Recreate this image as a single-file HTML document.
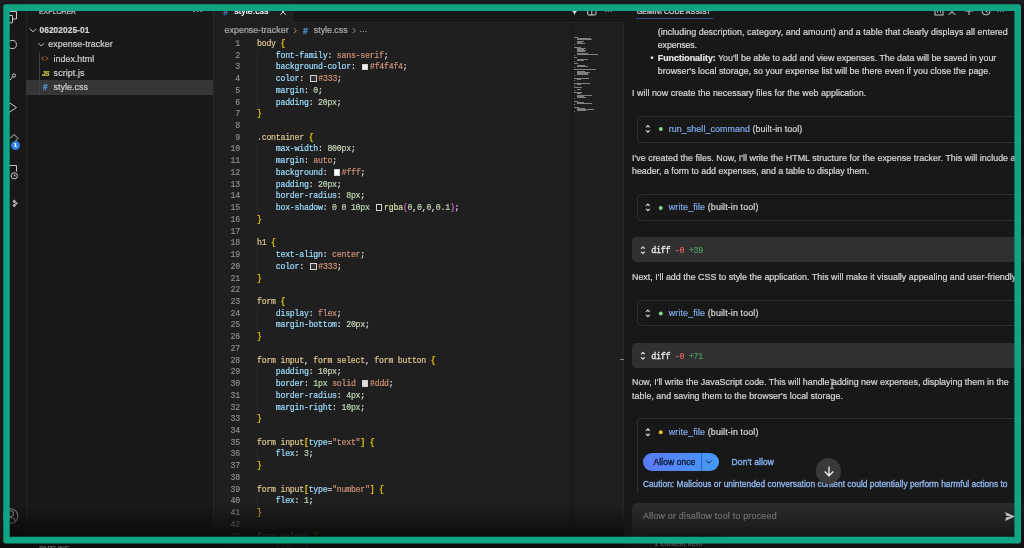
<!DOCTYPE html>
<html lang="en">
<head>
<meta charset="utf-8">
<title>style.css — expense-tracker</title>
<style>
*{box-sizing:border-box;margin:0;padding:0}
html,body{width:1024px;height:548px;overflow:hidden;background:#181818}
body{position:relative;font-family:"Liberation Sans",sans-serif;color:#ccc}
#wrap{position:absolute;left:0;top:0;width:1024px;height:548px;overflow:hidden;filter:blur(.35px)}
.abs{position:absolute}
.bg{position:absolute;top:0;height:548px}
.t{position:absolute;white-space:nowrap;line-height:12px;height:12px;font-size:8.9px;color:#ccc;-webkit-text-stroke:.22px}
.mono{font-family:"Liberation Mono",monospace}
.link{color:#7da8e8}
/* code */
.ln,.cl{position:absolute;font-family:"Liberation Mono",monospace;font-size:8.2px;letter-spacing:-.22px;line-height:11.73px;height:11.73px;white-space:pre}
.ln{left:213px;width:26.9px;text-align:right;color:#8e8e8e;-webkit-text-stroke:.15px}
.cl{left:257px;color:#dadada;-webkit-text-stroke:.2px}
.sel{color:#dcc38c}.prop{color:#9cdcfe}.val{color:#ce9178}.num{color:#c0d4b4}.br1{color:#ffd700}.br2{color:#da70d6}.fn{color:#dcdcaa}
.cb{display:inline-block;width:6.5px;height:6.5px;border:0.7px solid #d2d2d2;margin:0 1.8px 0 1.4px;vertical-align:-0.8px}
.ig{position:absolute;left:257px;width:1px;background:#2a2a2a}
#mm i{position:absolute;height:0.7px;background:#a0a0a0;opacity:.75;display:block}
.toolbox{position:absolute;left:637px;width:400px;border:1px solid #303030;border-radius:4.5px}
.diffbox{position:absolute;left:631.7px;width:400px;height:24.5px;border-radius:4.500px;background:#303030}
</style>
</head>
<body>
<div id="wrap">
<!-- region backgrounds -->
<div class="bg" style="left:0;width:26px;background:#181818"></div>
<div class="bg" style="left:26px;width:187.5px;background:#191919"></div>
<div class="bg" style="left:25.5px;width:1px;background:#242424"></div>
<div class="bg" style="left:213px;width:410.500px;background:#1f1f1f"></div>
<div class="bg" style="left:213px;width:1px;background:#272727"></div>
<div class="bg" style="left:623.500px;width:400.500px;background:#181818"></div>
<div class="bg" style="left:623px;width:1px;background:#262626"></div>
<!-- tab bar -->
<div class="abs" style="left:214px;top:0;width:409.5px;height:21.6px;background:#181818"></div>
<div class="abs" style="left:214px;top:21.6px;width:409.5px;height:1px;background:#272727"></div>
<div class="abs" style="left:214px;top:0;width:78px;height:22.6px;background:#1f1f1f"></div>
<div class="abs" style="left:292px;top:0;width:1px;height:21.6px;background:#272727"></div>
<!-- selected row -->
<div class="abs" style="left:26px;top:80.100px;width:187.300px;height:14.600px;background:#363639"></div>
<div class="abs" style="left:39.200px;top:52px;width:1px;height:42.700px;background:#3e3e3e"></div>
<!-- minimap shade -->
<div class="abs" style="left:567px;top:22.600px;width:6.500px;height:526px;background:linear-gradient(90deg,rgba(0,0,0,0),rgba(0,0,0,.16))"></div>

<!-- ACTIVITY BAR ICONS -->
<svg class="abs" style="left:0;top:0" width="26" height="548" viewBox="0 0 26 548" fill="none" stroke="#c8c8c8" stroke-width="1">
  <path d="M10 11.500h6.500v7.500h-4"/><path d="M8 15.500h4.500v7.300h-4.500"/>
  <circle cx="12.300" cy="44.500" r="4.100"/>
  <circle cx="14" cy="75.500" r="1.600"/><path d="M12.800 76.800 10 80"/>
  <path d="M9 102.500 16.500 107.500 9 112.500"/>
  <path d="M10 138.500 14 134.500 18 138.500 15.500 141"/>
  <path d="M9.500 165.500h7v6"/><circle cx="14.300" cy="175.800" r="3.100"/><path d="M14.300 174.300v1.600h1.300"/>
  <g stroke="#8e8e8e" stroke-width="1.100"><circle cx="10.500" cy="516" r="7.300"/><circle cx="10.500" cy="513.700" r="2.900"/><path d="M5.400 521.300c1.200-2.900 3-3.800 5.100-3.800s3.900.9 5.100 3.800"/></g>
</svg>
<svg class="abs" style="left:10.300px;top:199.300px" width="8.500" height="8.500" viewBox="0 0 12 12" fill="#bcbcbc">
  <path d="M6 .800 8.600 3.400 6 6 3.400 3.400z"/><path d="M8.800 3.800 11.200 6.200 8.800 8.600 6.400 6.200z" opacity=".85"/><path d="M6 6.400 8.600 9 6 11.600 3.400 9z"/>
</svg>
<div class="abs" style="left:10.5px;top:140.5px;width:9.6px;height:9.6px;border-radius:50%;background:#2f7fe0"></div>
<div class="t" style="left:10.5px;top:139.400px;width:9.6px;text-align:center;font-size:6px;font-weight:bold;color:#fff">1</div>

<!-- SIDEBAR ICONS -->
<svg class="abs" style="left:26px;top:0" width="187" height="100" viewBox="0 0 187 100" fill="none" stroke="#c5c5c5" stroke-width="1">
  <path d="M3.800 28.700 7 31.900 10.200 28.700"/>
  <path d="M12.500 43.200 15.300 46 18.100 43.200"/>
</svg>
<div class="t" style="left:192.500px;top:4.600px;font-size:9px;color:#c4c4c4;letter-spacing:.6px">···</div>
<svg class="abs" style="left:41.200px;top:55.400px" width="8" height="7" viewBox="0 0 8 7" fill="none" stroke="#d9782f" stroke-width="1"><path d="M2.700 1.600 .900 3.500 2.700 5.400M4.900 1.600 6.700 3.500 4.900 5.400"/></svg>
<div class="t" style="left:41.900px;top:67.500px;font-size:6.3px;font-weight:bold;font-style:italic;color:#cbcb41;letter-spacing:-.2px">JS</div>
<div class="t" style="left:42.800px;top:81.300px;font-size:8.3px;font-weight:bold;font-style:italic;color:#4f94d4;-webkit-text-stroke:.3px">#</div>

<!-- TAB / BREADCRUMB ICONS -->
<div class="t" style="left:223.300px;top:5.800px;font-size:8.3px;font-weight:bold;font-style:italic;color:#427fb8;-webkit-text-stroke:.3px">#</div>
<svg class="abs" style="left:278.600px;top:7.600px" width="8" height="8" viewBox="0 0 8 8" stroke="#d0d0d0" stroke-width="1" fill="none"><path d="M1.200 1.200 6.800 6.800M6.800 1.200 1.200 6.800"/></svg>
<svg class="abs" style="left:568px;top:4px" width="50" height="14" viewBox="0 0 50 14" fill="none" stroke="#d0d0d0" stroke-width="1">
  <path d="M6.600 1.500c.4 3.200 1.600 4.600 4.800 5-3.200.4-4.400 1.800-4.800 5-.4-3.200-1.600-4.600-4.800-5 3.200-.4 4.400-1.800 4.800-5z" fill="#e8e8e8" stroke="none"/>
  <rect x="19.700" y="3.500" width="8.200" height="7.500" rx="1"/><path d="M23.800 3.500v7.500"/>
  <circle cx="37.600" cy="7" r=".7" fill="#d0d0d0" stroke="none"/><circle cx="40.300" cy="7" r=".7" fill="#d0d0d0" stroke="none"/><circle cx="43" cy="7" r=".7" fill="#d0d0d0" stroke="none"/>
</svg>
<svg class="abs" style="left:291px;top:26px" width="8" height="9" viewBox="0 0 8 9" fill="none" stroke="#a0a0a0" stroke-width=".9"><path d="M2.800 2.200 5.300 4.700 2.800 7.200"/></svg>
<div class="t" style="left:303px;top:24.800px;font-size:8.3px;font-weight:bold;font-style:italic;color:#4f94d4;-webkit-text-stroke:.3px">#</div>
<svg class="abs" style="left:350px;top:26px" width="8" height="9" viewBox="0 0 8 9" fill="none" stroke="#a0a0a0" stroke-width=".9"><path d="M2.800 2.200 5.300 4.700 2.800 7.200"/></svg>

<!-- CODE -->
<div class="ig" style="top:49.63px;height:58.65px"></div>
<div class="ig" style="top:143.47px;height:70.38px"></div>
<div class="ig" style="top:249.04px;height:23.46px"></div>
<div class="ig" style="top:307.69px;height:23.46px"></div>
<div class="ig" style="top:366.34px;height:46.92px"></div>
<div class="ig" style="top:448.45px;height:11.73px"></div>
<div class="ig" style="top:495.37px;height:11.73px"></div>
<div class="ig" style="top:542.29px;height:11.73px"></div>
<div class="ln" style="top:37.90px">1</div>
<div class="cl" style="top:37.90px"><span class="sel">body</span> <span class="br1">{</span></div>
<div class="ln" style="top:49.63px">2</div>
<div class="cl" style="top:49.63px">    <span class="prop">font-family</span>: <span class="val">sans-serif</span>;</div>
<div class="ln" style="top:61.36px">3</div>
<div class="cl" style="top:61.36px">    <span class="prop">background-color</span>: <span class="cb" style="background:#f4f4f4"></span><span class="val">#f4f4f4</span>;</div>
<div class="ln" style="top:73.09px">4</div>
<div class="cl" style="top:73.09px">    <span class="prop">color</span>: <span class="cb" style="background:#333"></span><span class="val">#333</span>;</div>
<div class="ln" style="top:84.82px">5</div>
<div class="cl" style="top:84.82px">    <span class="prop">margin</span>: <span class="num">0</span>;</div>
<div class="ln" style="top:96.55px">6</div>
<div class="cl" style="top:96.55px">    <span class="prop">padding</span>: <span class="num">20px</span>;</div>
<div class="ln" style="top:108.28px">7</div>
<div class="cl" style="top:108.28px"><span class="br1">}</span></div>
<div class="ln" style="top:120.01px">8</div>
<div class="ln" style="top:131.74px">9</div>
<div class="cl" style="top:131.74px"><span class="sel">.container</span> <span class="br1">{</span></div>
<div class="ln" style="top:143.47px">10</div>
<div class="cl" style="top:143.47px">    <span class="prop">max-width</span>: <span class="num">800px</span>;</div>
<div class="ln" style="top:155.20px">11</div>
<div class="cl" style="top:155.20px">    <span class="prop">margin</span>: <span class="val">auto</span>;</div>
<div class="ln" style="top:166.93px">12</div>
<div class="cl" style="top:166.93px">    <span class="prop">background</span>: <span class="cb" style="background:#fff"></span><span class="val">#fff</span>;</div>
<div class="ln" style="top:178.66px">13</div>
<div class="cl" style="top:178.66px">    <span class="prop">padding</span>: <span class="num">20px</span>;</div>
<div class="ln" style="top:190.39px">14</div>
<div class="cl" style="top:190.39px">    <span class="prop">border-radius</span>: <span class="num">8px</span>;</div>
<div class="ln" style="top:202.12px">15</div>
<div class="cl" style="top:202.12px">    <span class="prop">box-shadow</span>: <span class="num">0</span> <span class="num">0</span> <span class="num">10px</span> <span class="cb" style="background:#1a1a1a"></span><span class="fn">rgba</span><span class="br2">(</span><span class="num">0</span>,<span class="num">0</span>,<span class="num">0</span>,<span class="num">0.1</span><span class="br2">)</span>;</div>
<div class="ln" style="top:213.85px">16</div>
<div class="cl" style="top:213.85px"><span class="br1">}</span></div>
<div class="ln" style="top:225.58px">17</div>
<div class="ln" style="top:237.31px">18</div>
<div class="cl" style="top:237.31px"><span class="sel">h1</span> <span class="br1">{</span></div>
<div class="ln" style="top:249.04px">19</div>
<div class="cl" style="top:249.04px">    <span class="prop">text-align</span>: <span class="val">center</span>;</div>
<div class="ln" style="top:260.77px">20</div>
<div class="cl" style="top:260.77px">    <span class="prop">color</span>: <span class="cb" style="background:#333"></span><span class="val">#333</span>;</div>
<div class="ln" style="top:272.50px">21</div>
<div class="cl" style="top:272.50px"><span class="br1">}</span></div>
<div class="ln" style="top:284.23px">22</div>
<div class="ln" style="top:295.96px">23</div>
<div class="cl" style="top:295.96px"><span class="sel">form</span> <span class="br1">{</span></div>
<div class="ln" style="top:307.69px">24</div>
<div class="cl" style="top:307.69px">    <span class="prop">display</span>: <span class="val">flex</span>;</div>
<div class="ln" style="top:319.42px">25</div>
<div class="cl" style="top:319.42px">    <span class="prop">margin-bottom</span>: <span class="num">20px</span>;</div>
<div class="ln" style="top:331.15px">26</div>
<div class="cl" style="top:331.15px"><span class="br1">}</span></div>
<div class="ln" style="top:342.88px">27</div>
<div class="ln" style="top:354.61px">28</div>
<div class="cl" style="top:354.61px"><span class="sel">form input</span>, <span class="sel">form select</span>, <span class="sel">form button</span> <span class="br1">{</span></div>
<div class="ln" style="top:366.34px">29</div>
<div class="cl" style="top:366.34px">    <span class="prop">padding</span>: <span class="num">10px</span>;</div>
<div class="ln" style="top:378.07px">30</div>
<div class="cl" style="top:378.07px">    <span class="prop">border</span>: <span class="num">1px</span> <span class="val">solid</span> <span class="cb" style="background:#ddd"></span><span class="val">#ddd</span>;</div>
<div class="ln" style="top:389.80px">31</div>
<div class="cl" style="top:389.80px">    <span class="prop">border-radius</span>: <span class="num">4px</span>;</div>
<div class="ln" style="top:401.53px">32</div>
<div class="cl" style="top:401.53px">    <span class="prop">margin-right</span>: <span class="num">10px</span>;</div>
<div class="ln" style="top:413.26px">33</div>
<div class="cl" style="top:413.26px"><span class="br1">}</span></div>
<div class="ln" style="top:424.99px">34</div>
<div class="ln" style="top:436.72px">35</div>
<div class="cl" style="top:436.72px"><span class="sel">form input</span><span class="br1">[</span><span class="prop">type</span>=<span class="val">"text"</span><span class="br1">]</span> <span class="br1">{</span></div>
<div class="ln" style="top:448.45px">36</div>
<div class="cl" style="top:448.45px">    <span class="prop">flex</span>: <span class="num">3</span>;</div>
<div class="ln" style="top:460.18px">37</div>
<div class="cl" style="top:460.18px"><span class="br1">}</span></div>
<div class="ln" style="top:471.91px">38</div>
<div class="ln" style="top:483.64px">39</div>
<div class="cl" style="top:483.64px"><span class="sel">form input</span><span class="br1">[</span><span class="prop">type</span>=<span class="val">"number"</span><span class="br1">]</span> <span class="br1">{</span></div>
<div class="ln" style="top:495.37px">40</div>
<div class="cl" style="top:495.37px">    <span class="prop">flex</span>: <span class="num">1</span>;</div>
<div class="ln" style="top:507.10px">41</div>
<div class="cl" style="top:507.10px"><span class="br1">}</span></div>
<div class="ln" style="top:518.83px">42</div>
<div class="ln" style="top:530.56px">43</div>
<div class="cl" style="top:530.56px"><span class="sel">form select</span> <span class="br1">{</span></div>
<div class="ln" style="top:542.29px">44</div>
<div class="cl" style="top:542.29px">    <span class="prop">flex</span>: <span class="num">2</span>;</div>
<div class="ln" style="top:554.02px">45</div>
<div class="cl" style="top:554.02px"><span class="br1">}</span></div>
<div id="mm" class="abs" style="left:0;top:0"><i style="left:574.30px;top:36.90px;width:3.48px"></i><i style="left:576.62px;top:38.10px;width:13.92px"></i><i style="left:576.62px;top:39.30px;width:15.08px"></i><i style="left:576.62px;top:40.50px;width:6.96px"></i><i style="left:576.62px;top:41.70px;width:5.80px"></i><i style="left:576.62px;top:42.90px;width:8.12px"></i><i style="left:574.30px;top:44.10px;width:0.58px"></i><i style="left:574.30px;top:46.50px;width:6.96px"></i><i style="left:576.62px;top:47.70px;width:9.86px"></i><i style="left:576.62px;top:48.90px;width:7.54px"></i><i style="left:576.62px;top:50.10px;width:9.86px"></i><i style="left:576.62px;top:51.30px;width:8.12px"></i><i style="left:576.62px;top:52.50px;width:11.02px"></i><i style="left:576.62px;top:53.70px;width:21.46px"></i><i style="left:574.30px;top:54.90px;width:0.58px"></i><i style="left:574.30px;top:57.30px;width:2.32px"></i><i style="left:576.62px;top:58.50px;width:11.02px"></i><i style="left:576.62px;top:59.70px;width:6.96px"></i><i style="left:574.30px;top:60.90px;width:0.58px"></i><i style="left:574.30px;top:63.30px;width:3.48px"></i><i style="left:576.62px;top:64.50px;width:8.12px"></i><i style="left:576.62px;top:65.70px;width:11.60px"></i><i style="left:574.30px;top:66.90px;width:0.58px"></i><i style="left:574.30px;top:69.30px;width:22.04px"></i><i style="left:576.62px;top:70.50px;width:8.12px"></i><i style="left:576.62px;top:71.70px;width:13.34px"></i><i style="left:576.62px;top:72.90px;width:11.02px"></i><i style="left:576.62px;top:74.10px;width:11.02px"></i><i style="left:574.30px;top:75.30px;width:0.58px"></i><i style="left:574.30px;top:77.70px;width:14.50px"></i><i style="left:576.62px;top:78.90px;width:4.64px"></i><i style="left:574.30px;top:80.10px;width:0.58px"></i><i style="left:574.30px;top:82.50px;width:15.66px"></i><i style="left:576.62px;top:83.70px;width:4.64px"></i><i style="left:574.30px;top:84.90px;width:0.58px"></i><i style="left:574.30px;top:87.30px;width:7.54px"></i><i style="left:576.62px;top:88.50px;width:4.64px"></i><i style="left:574.30px;top:89.70px;width:0.58px"></i><i style="left:574.30px;top:92.10px;width:7.54px"></i><i style="left:576.62px;top:93.30px;width:4.64px"></i><i style="left:576.62px;top:94.50px;width:15.08px"></i><i style="left:576.62px;top:95.70px;width:7.54px"></i><i style="left:576.62px;top:96.90px;width:9.28px"></i><i style="left:574.30px;top:98.10px;width:0.58px"></i><i style="left:574.30px;top:100.50px;width:4.06px"></i><i style="left:576.62px;top:101.70px;width:6.96px"></i><i style="left:576.62px;top:102.90px;width:15.08px"></i><i style="left:574.30px;top:104.10px;width:0.58px"></i><i style="left:574.30px;top:106.50px;width:4.64px"></i><i style="left:576.62px;top:107.70px;width:8.12px"></i><i style="left:576.62px;top:108.90px;width:17.40px"></i><i style="left:576.62px;top:110.10px;width:9.86px"></i><i style="left:574.30px;top:111.30px;width:0.58px"></i></div>

<!-- PANEL chrome -->
<div class="abs" style="left:636px;top:18.100px;width:77px;height:1.100px;background:#2d4c8a"></div>
<svg class="abs" style="left:933px;top:4.300px" width="80" height="14" viewBox="0 0 80 14" fill="none" stroke="#c8c8c8" stroke-width="1">
  <rect x="2" y="3" width="8" height="8"/><path d="M4.500 5.500v3M7.500 5.500v3"/>
  <circle cx="19" cy="5.500" r="1.800"/><path d="M15.800 11c.5-3 5.900-3 6.400 0M23.500 4.500l2 2M25.500 4.500l-2 2"/>
  <path d="M36 3v8M32 7h8"/>
  <circle cx="53" cy="7" r="4"/><path d="M53 4.500v2.800l1.800 1"/>
  <circle cx="65" cy="7" r=".7" fill="#c8c8c8" stroke="none"/><circle cx="67.700" cy="7" r=".7" fill="#c8c8c8" stroke="none"/><circle cx="70.400" cy="7" r=".7" fill="#c8c8c8" stroke="none"/>
</svg>
<div class="toolbox" style="top:115.600px;height:27.500px"></div>
<div class="toolbox" style="top:194px;height:26.900px"></div>
<div class="diffbox" style="top:237.300px"></div>
<div class="toolbox" style="top:299.700px;height:26.500px"></div>
<div class="diffbox" style="top:343.100px"></div>
<div class="toolbox" style="top:418.400px;height:74px;border-bottom:none;border-radius:4.500px 4.500px 0 0"></div>
<svg class="abs" style="left:624px;top:0" width="60" height="548" viewBox="0 0 60 548" fill="none" stroke="#d4d4d4" stroke-width="1.250">
  <path d="M22.100 127.400 23.900 125.600 25.700 127.400M22.100 130.400 23.900 132.200 25.700 130.400"/>
  <path d="M22.100 205.900 23.900 204.100 25.700 205.900M22.100 208.900 23.900 210.700 25.700 208.900"/>
  <path d="M22.100 311.900 23.900 310.100 25.700 311.900M22.100 314.900 23.900 316.700 25.700 314.900"/>
  <path d="M22.100 430.800 23.900 429 25.700 430.800M22.100 433.800 23.900 435.600 25.700 433.800"/>
  <path d="M17.100 248.700 18.900 246.900 20.700 248.700M17.100 251.700 18.900 253.500 20.700 251.700"/>
  <path d="M17.100 354.300 18.900 352.500 20.700 354.300M17.100 357.300 18.900 359.100 20.700 357.300"/>
  <g stroke="none">
  <circle cx="36.800" cy="128.900" r="2" fill="#86d886"/>
  <circle cx="36.800" cy="207.900" r="2" fill="#86d886"/>
  <circle cx="36.800" cy="313.400" r="2" fill="#86d886"/>
  <circle cx="36.800" cy="432.300" r="2" fill="#efbe3c"/>
  </g>
</svg>

<!-- allow buttons -->
<div class="abs" style="left:642.900px;top:452.800px;width:75.700px;height:18.600px;border-radius:9.300px;background:linear-gradient(90deg,#5c7af6,#4499f6)"></div>
<div class="abs" style="left:700.600px;top:452.800px;width:1px;height:18.600px;background:#2f62c4"></div>
<svg class="abs" style="left:703.600px;top:458.200px" width="10" height="8" viewBox="0 0 10 8" fill="none" stroke="#0d1b33" stroke-width="1"><path d="M2.400 2.600 5 5.200 7.600 2.600"/></svg>

<!-- scroll-down button -->
<div class="abs" style="left:815.700px;top:458.100px;width:25.800px;height:25.800px;border-radius:50%;background:#393939;z-index:5"></div>
<svg class="abs" style="left:821.600px;top:464px;z-index:6" width="14" height="14" viewBox="0 0 14 14" fill="none" stroke="#f0f0f0" stroke-width="1.300"><path d="M7 2.600v9M2.700 7.500 7 11.800 11.300 7.500"/></svg>

<!-- input -->
<div class="abs" style="left:631.700px;top:503.100px;width:400px;height:50px;border-radius:5px 5px 0 0;background:#2a2a2a"></div>
<svg class="abs" style="left:1003.500px;top:511px;z-index:8" width="12" height="11" viewBox="0 0 12 11" fill="#bdbdbd"><path d="M1 1 11 5.500 1 10 2.300 6.200 7 5.500 2.300 4.800z"/></svg>

<div class="abs" style="left:642px;top:533.500px;width:83px;height:22px;border-radius:4px;background:#171717"></div>
<!-- text cursor -->
<svg class="abs" style="left:828px;top:378px" width="8" height="12" viewBox="0 0 8 12" fill="none" stroke="#eee" stroke-width=".9"><path d="M2 1.200c1.200 0 2 .4 2 1.300v7c0 .9-.8 1.300-2 1.300M6 1.200c-1.200 0-2 .4-2 1.300M6 10.800c-1.200 0-2-.4-2-1.300M3 6h2"/></svg>
<!-- sash mark -->
<div class="abs" style="left:620px;top:359px;width:4px;height:1px;background:#8a8a8a"></div>

<!-- TEXTS -->
<div class="t" style="left:39.10px;top:6.35px;font-size:6.90px;color:#c4c4c4;letter-spacing:-0.076px">EXPLORER</div>
<div class="t" style="left:39.50px;top:24.05px;font-size:8.30px;color:#d0d0d0;letter-spacing:0.088px"><b>06202025-01</b></div>
<div class="t" style="left:48.30px;top:38.05px;font-size:8.90px;letter-spacing:0.061px">expense-tracker</div>
<div class="t" style="left:53.60px;top:52.95px;font-size:8.90px;letter-spacing:0.016px">index.html</div>
<div class="t" style="left:53.60px;top:67.35px;font-size:8.90px;letter-spacing:0.101px">script.js</div>
<div class="t" style="left:53.60px;top:80.55px;font-size:8.90px;letter-spacing:0.046px">style.css</div>
<div class="t" style="left:39.10px;top:542.75px;font-size:6.90px;color:#bdbdbd;z-index:9;"><b>OUTLINE</b></div>
<div class="t" style="left:234.30px;top:5.35px;font-size:8.90px;color:#fff;letter-spacing:0.021px">style.css</div>
<div class="t" style="left:224.50px;top:24.25px;font-size:8.90px;color:#a9a9a9;letter-spacing:0.033px">expense-tracker</div>
<div class="t" style="left:313.80px;top:24.25px;font-size:8.90px;color:#a9a9a9;letter-spacing:-0.029px">style.css</div>
<div class="t" style="left:359.50px;top:24.25px;font-size:8.00px;color:#a9a9a9;">…</div>
<div class="t" style="left:636.90px;top:6.25px;font-size:6.90px;color:#dcdcdc;letter-spacing:0.090px">GEMINI CODE ASSIST</div>
<div class="t" style="left:657.80px;top:26.25px;font-size:8.90px;color:#d4d4d4;letter-spacing:0.037px">(including description, category, and amount) and a table that clearly displays all entered</div>
<div class="t" style="left:657.80px;top:39.15px;font-size:8.90px;color:#d4d4d4;letter-spacing:-0.146px">expenses.</div>
<div class="t" style="left:650.60px;top:52.05px;font-size:8.90px;color:#d4d4d4;">•</div>
<div class="t" style="left:657.80px;top:52.05px;font-size:8.90px;color:#d4d4d4;letter-spacing:-0.017px"><b style="color:#e4e4e4">Functionality:</b> You'll be able to add and view expenses. The data will be saved in your</div>
<div class="t" style="left:657.80px;top:65.45px;font-size:8.90px;color:#d4d4d4;letter-spacing:0.014px">browser's local storage, so your expense list will be there even if you close the page.</div>
<div class="t" style="left:632.00px;top:86.55px;font-size:8.90px;color:#d4d4d4;letter-spacing:0.022px">I will now create the necessary files for the web application.</div>
<div class="t" style="left:668.80px;top:122.55px;font-size:8.90px;color:#d4d4d4;letter-spacing:0.071px"><span class="link">run_shell_command</span> (built-in tool)</div>
<div class="t" style="left:632.00px;top:151.85px;font-size:8.90px;color:#d4d4d4;letter-spacing:0.032px">I've created the files. Now, I'll write the HTML structure for the expense tracker. This will include a</div>
<div class="t" style="left:632.00px;top:164.85px;font-size:8.90px;color:#d4d4d4;letter-spacing:-0.019px">header, a form to add expenses, and a table to display them.</div>
<div class="t" style="left:668.80px;top:201.25px;font-size:8.90px;color:#d4d4d4;letter-spacing:0.131px"><span class="link">write_file</span> (built-in tool)</div>
<div class="t mono" style="left:651.30px;top:245.20px;font-size:8.40px;color:#e4e4e4;letter-spacing:-0.331px"><span style="-webkit-text-stroke:.35px">diff</span> <span style="color:#e8605a">-0</span> <span style="color:#4c9a5c">+39</span></div>
<div class="t" style="left:632.00px;top:270.75px;font-size:8.90px;color:#d4d4d4;letter-spacing:0.013px">Next, I'll add the CSS to style the application. This will make it visually appealing and user-friendly.</div>
<div class="t" style="left:668.80px;top:306.85px;font-size:8.90px;color:#d4d4d4;letter-spacing:0.131px"><span class="link">write_file</span> (built-in tool)</div>
<div class="t mono" style="left:651.30px;top:350.80px;font-size:8.40px;color:#e4e4e4;letter-spacing:-0.331px"><span style="-webkit-text-stroke:.35px">diff</span> <span style="color:#e8605a">-0</span> <span style="color:#4c9a5c">+71</span></div>
<div class="t" style="left:632.00px;top:376.35px;font-size:8.90px;color:#d4d4d4;letter-spacing:0.003px">Now, I'll write the JavaScript code. This will handle adding new expenses, displaying them in the</div>
<div class="t" style="left:632.00px;top:389.75px;font-size:8.90px;color:#d4d4d4;letter-spacing:0.028px">table, and saving them to the browser's local storage.</div>
<div class="t" style="left:668.80px;top:425.75px;font-size:8.90px;color:#d4d4d4;letter-spacing:0.131px"><span class="link">write_file</span> (built-in tool)</div>
<div class="t" style="left:653.50px;top:455.65px;font-size:8.50px;color:#0d1b33;-webkit-text-stroke:.35px;letter-spacing:0.077px">Allow once</div>
<div class="t" style="left:731.60px;top:455.55px;font-size:8.50px;color:#86b2f4;-webkit-text-stroke:.35px;letter-spacing:0.109px">Don't allow</div>
<div class="t" style="left:642.90px;top:478.05px;font-size:8.40px;color:#93b8f3;-webkit-text-stroke:.3px;letter-spacing:0.010px">Caution: Malicious or unintended conversation content could potentially perform harmful actions to</div>
<div class="t" style="left:642.90px;top:509.85px;font-size:8.90px;color:#8e8e8e;letter-spacing:0.216px">Allow or disallow tool to proceed</div>
<div class="t" style="left:654.00px;top:538.05px;font-size:7.80px;color:#a8a8a8;z-index:9;">1 context item</div>

<!-- bottom fades -->
<div class="abs" style="left:0;top:503px;width:623.500px;height:45px;background:linear-gradient(rgba(10,10,10,0),rgba(10,10,10,.5) 42%,rgba(10,10,10,.9) 72%);z-index:7"></div>
<div class="abs" style="left:624px;top:506px;width:400px;height:42px;background:linear-gradient(rgba(18,18,18,0),rgba(18,18,18,.8) 75%);z-index:7"></div>

</div>
<!-- recording frame -->
<svg class="abs" style="left:0;top:0;filter:blur(.3px)" width="1024" height="548" viewBox="0 0 1024 548">
  <rect x="0" y="0" width="1024" height="4.300" fill="#1e1d23" fill-opacity=".6"/>
  <rect x="0" y="4.300" width="3.300" height="539.100" fill="#1c1c20" fill-opacity=".6"/>
  <rect x="1021" y="4.300" width="3" height="539.100" fill="#0e0e10" fill-opacity=".6"/>
  <rect x="0" y="543.400" width="1024" height="4.600" fill="#0e0e10" fill-opacity=".55"/>
  <path fill="#0fa584" fill-rule="evenodd" d="M5.800 4.300H1018.500Q1021 4.300 1021 6.800V540.900Q1021 543.400 1018.500 543.400H5.800Q3.300 543.400 3.300 540.900V6.800Q3.300 4.300 5.800 4.300ZM9.700 10.900V536.800H1014.400V10.900Z"/>
</svg>
</body>
</html>
